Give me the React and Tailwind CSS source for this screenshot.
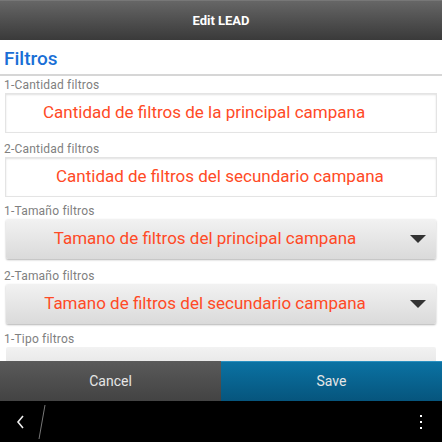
export default function App() {
  const inputs = [
    { label: '1-Cantidad filtros', value: 'Cantidad de filtros de la principal campana', pl: 'pl-[37px]', gap: 'h-[7px]' },
    { label: '2-Cantidad filtros', value: 'Cantidad de filtros del secundario campana', pl: 'pl-[50px]', gap: 'h-[5px]' },
  ];
  const selects = [
    { label: '1-Tamaño filtros', value: 'Tamano de filtros del principal campana', gap: 'h-[8px]' },
    { label: '2-Tamaño filtros', value: 'Tamano de filtros del secundario campana', gap: 'h-[6px]' },
  ];

  return (
    <div className="w-[442px] h-[442px] flex flex-col bg-white overflow-hidden" style={{ fontFamily: 'Roboto, "Liberation Sans", sans-serif' }}>
      {/* Title bar */}
      <div className="h-[40px] shrink-0 flex items-center justify-center bg-gradient-to-b from-[#666666] to-[#3a3a3a] border-t border-[#777]">
        <span className="text-white text-[13px] font-bold">Edit LEAD</span>
      </div>

      {/* Content */}
      <div className="flex-1 overflow-hidden flex flex-col">
        <div className="h-[36px] shrink-0 flex items-center pt-[4px] px-[4px] border-b-2 border-[#d6d6d6]">
          <span className="text-[#1a6fd6] text-[19px] font-medium">Filtros</span>
        </div>

        {inputs.map((f) => (
          <div key={f.label} className="flex flex-col">
            <div className="h-[17px] pl-[4px] pt-[2px] text-[12px] leading-[14px] text-[#808080] tracking-[0.2px]">{f.label}</div>
            <div className="mx-[5px] h-[40px] bg-white border border-[#e4e4e4] shadow-[inset_0_1px_2px_rgba(0,0,0,0.12)] flex items-center">
              <span className={`${f.pl} text-[17px] text-[#ff4a26]`}>{f.value}</span>
            </div>
            <div className={f.gap} />
          </div>
        ))}

        {selects.map((f) => (
          <div key={f.label} className="flex flex-col">
            <div className="h-[17px] pl-[4px] pt-[2px] text-[12px] leading-[14px] text-[#808080] tracking-[0.2px]">{f.label}</div>
            <div className="mx-[6px] h-[40px] rounded-[2px] bg-gradient-to-b from-[#f2f2f2] to-[#dadada] shadow-[0_1px_2px_rgba(0,0,0,0.3)] flex items-center">
              <span className="flex-1 text-center text-[17px] text-[#ff4a26]">{f.value}</span>
              <svg width="16" height="9" viewBox="0 0 16 9" className="mr-[10px] ml-[6px]">
                <path d="M0 0 L16 0 L8 8 Z" fill="#333" />
              </svg>
            </div>
            <div className={f.gap} />
          </div>
        ))}

        <div className="flex flex-col">
          <div className="h-[17px] pl-[4px] pt-[2px] text-[12px] leading-[14px] text-[#808080] tracking-[0.2px]">1-Tipo filtros</div>
          <div className="mx-[6px] h-[40px] rounded-[2px] bg-gradient-to-b from-[#f2f2f2] to-[#dadada]" />
        </div>
      </div>

      {/* Action bar */}
      <div className="h-[40px] shrink-0 flex">
        <button className="w-[221px] flex items-center justify-center bg-gradient-to-b from-[#5a5a5a] to-[#434343] text-[#e6e6e6] text-[14px]">
          Cancel
        </button>
        <button className="flex-1 flex items-center justify-center bg-gradient-to-b from-[#0b72a3] to-[#06557d] border-t border-[#2a90c0] text-[#e6e6e6] text-[14px]">
          Save
        </button>
      </div>

      {/* Nav bar */}
      <div className="h-[41px] shrink-0 bg-black flex items-center">
        <svg width="12" height="16" viewBox="0 0 12 16" className="ml-[15px]">
          <path d="M8 2 L3 8 L8 14" stroke="#eee" strokeWidth="1.6" fill="none" />
        </svg>
        <svg width="12" height="36" viewBox="0 0 12 36" className="ml-[9px]">
          <path d="M9 1 L3 35" stroke="#777" strokeWidth="1" fill="none" />
        </svg>
        <div className="ml-auto mr-[20px] flex flex-col gap-[4px]">
          <div className="w-[2px] h-[2px] bg-white" />
          <div className="w-[2px] h-[2px] bg-white" />
          <div className="w-[2px] h-[2px] bg-white" />
        </div>
      </div>
    </div>
  );
}
